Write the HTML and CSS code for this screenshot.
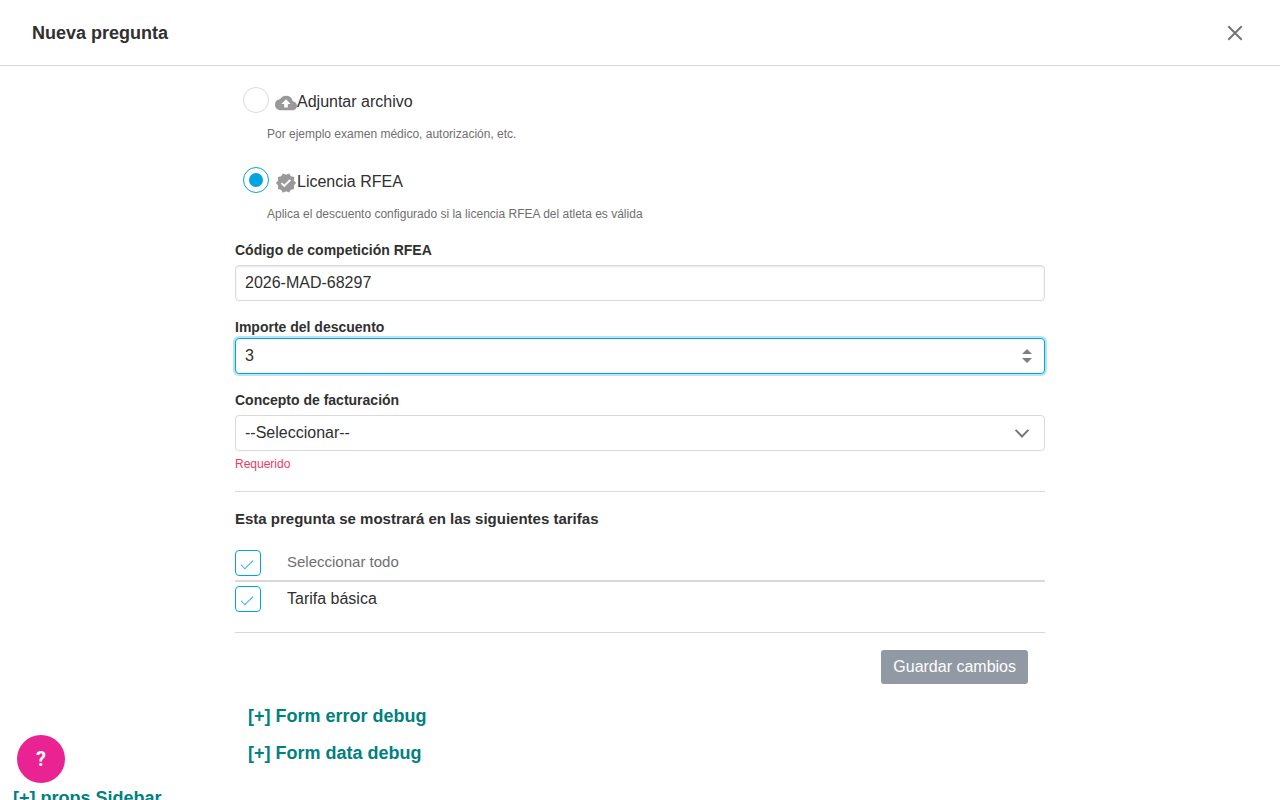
FILE: index.html
```html
<!DOCTYPE html>
<html lang="es">
<head>
<meta charset="utf-8">
<meta name="viewport" content="width=device-width, initial-scale=1">
<title>Nueva pregunta</title>
<link rel="stylesheet" href="styles.css">
</head>
<body>
<header class="topbar">
  <h1 class="topbar-title">Nueva pregunta</h1>
  <button class="close" type="button" aria-label="Cerrar">
    <svg width="16" height="16" viewBox="0 0 16 16"><path d="M1.3 1.3L14.7 14.7M14.7 1.3L1.3 14.7" fill="none" stroke="#757575" stroke-width="2"/></svg>
  </button>
</header>
<main>
  <form class="form">
    <div class="option">
      <div class="option-row">
        <input class="radio" type="radio" name="tipo" id="archivo">
        <label class="option-label" for="archivo">
          <svg class="option-icon" width="22" height="22" viewBox="0 0 24 24"><path fill="#999" d="M19.35 10.04A7.49 7.49 0 0 0 12 4C9.11 4 6.6 5.64 5.35 8.04A5.994 5.994 0 0 0 0 14c0 3.31 2.69 6 6 6h13c2.76 0 5-2.24 5-5 0-2.64-2.05-4.78-4.65-4.96zM14 13v4h-4v-4H7l5-5 5 5h-3z"/></svg>
          <span>Adjuntar archivo</span>
        </label>
      </div>
      <p class="option-help">Por ejemplo examen médico, autorización, etc.</p>
    </div>
    <div class="option">
      <div class="option-row">
        <input class="radio" type="radio" name="tipo" id="licencia" checked>
        <label class="option-label" for="licencia">
          <svg class="option-icon" width="22" height="22" viewBox="0 0 24 24"><path fill="#999" d="M23 12l-2.44-2.79.34-3.69-3.61-.82-1.89-3.2L12 2.96 8.6 1.5 6.71 4.69 3.1 5.5l.34 3.7L1 12l2.44 2.79-.34 3.7 3.61.82L8.6 22.5l3.4-1.47 3.4 1.46 1.89-3.19 3.61-.82-.34-3.69L23 12zm-12.91 4.72l-3.8-3.81 1.48-1.48 2.32 2.33 5.85-5.87 1.48 1.48-7.33 7.35z"/></svg>
          <span>Licencia RFEA</span>
        </label>
      </div>
      <p class="option-help">Aplica el descuento configurado si la licencia RFEA del atleta es válida</p>
    </div>

    <div class="field">
      <label class="field-label spaced" for="codigo">Código de competición RFEA</label>
      <input class="control" type="text" id="codigo" value="2026-MAD-68297">
    </div>
    <div class="field">
      <label class="field-label" for="importe">Importe del descuento</label>
      <div class="control-wrap">
        <input class="control active" type="number" id="importe" value="3">
        <svg class="spinner" width="10" height="14" viewBox="0 0 10 14"><path fill="#808080" d="M5 0L10 5H0zM5 14L0 9h10z"/></svg>
      </div>
    </div>
    <div class="field">
      <label class="field-label spaced" for="concepto">Concepto de facturación</label>
      <div class="control-wrap">
        <select class="control" id="concepto"><option>--Seleccionar--</option></select>
        <svg class="chevron" width="16" height="10" viewBox="0 0 16 10"><path d="M1.6 1.9L8 8.5l6.4-6.6" fill="none" stroke="#777" stroke-width="2"/></svg>
      </div>
      <p class="error">Requerido</p>
    </div>

    <section class="rates">
      <h2 class="rates-title">Esta pregunta se mostrará en las siguientes tarifas</h2>
      <div class="rate rate-all">
        <input class="check" type="checkbox" id="todo" checked>
        <label for="todo">Seleccionar todo</label>
      </div>
      <div class="rate">
        <input class="check" type="checkbox" id="basica" checked>
        <label for="basica">Tarifa básica</label>
      </div>
    </section>

    <div class="actions">
      <button class="save" type="button">Guardar cambios</button>
    </div>
    <div class="debug">
      <button class="debug-toggle" type="button">[+] Form error debug</button>
      <button class="debug-toggle" type="button">[+] Form data debug</button>
    </div>
  </form>
</main>
<footer class="page-foot">
  <button class="debug-toggle" type="button">[+] props Sidebar</button>
</footer>
<button class="help" type="button" aria-label="Ayuda">?</button>
</body>
</html>
```
FILE: styles.css
```css
* { box-sizing: border-box; }
html { scrollbar-width: none; }
body {
  margin: 0;
  background: #fff;
  color: #303030;
  font: 16px/24px "Liberation Sans", Arial, sans-serif;
}
h1, h2, p { margin: 0; }
button, input, select { font: inherit; color: inherit; }
button { border: 0; padding: 0; background: none; cursor: pointer; }

.topbar {
  display: flex;
  align-items: center;
  justify-content: space-between;
  padding: 20px 32px 19px;
  border-bottom: 1px solid #d9d9d9;
}
.topbar-title { font-size: 18px; line-height: 26px; }
.close { display: flex; padding: 4px 5px; }

.form {
  max-width: 842px;
  margin: 0 auto;
  padding: 21px 16px 0;
}
.option { padding-left: 8px; margin-bottom: 24px; }
.option-row { display: flex; align-items: flex-start; gap: 6px; }
.option-label { display: flex; padding-top: 3px; }
.option-icon { margin-top: 2px; }
.option-help {
  margin: 11px 0 0 24px;
  font-size: 12px;
  line-height: 18px;
  color: #6f6f6f;
}
.radio, .check {
  appearance: none;
  flex: none;
  display: grid;
  place-items: center;
  width: 26px;
  height: 26px;
  margin: 0;
  border: 1px solid #d9d9d9;
  background: #fff;
}
.radio { border-radius: 50%; }
.radio:checked, .check:checked { border-color: #00a5df; }
.radio:checked::before {
  content: "";
  width: 14px;
  height: 14px;
  border-radius: 50%;
  background: #00a5df;
}

.field { margin-bottom: 16px; }
.field-label {
  display: block;
  font-size: 14px;
  line-height: 21px;
  font-weight: bold;
}
.spaced { margin-bottom: 4px; }
.option + .field { margin-top: -7px; }
.control-wrap { position: relative; }
.control {
  appearance: none;
  display: block;
  width: 100%;
  height: 36px;
  padding: 0 9px;
  border: 1px solid #d9d9d9;
  border-radius: 4px;
  background: #fff;
  outline: 0;
}
input.control { box-shadow: inset 0 1px 2px #0000001a; }
.control[type="number"] { appearance: textfield; }
.control[type="number"]::-webkit-inner-spin-button { appearance: none; margin: 0; }
input.active { border-color: #00a5df; box-shadow: 0 0 0 2px #b7e5f6; }
.spinner, .chevron { position: absolute; top: 0; bottom: 0; margin: auto 0; pointer-events: none; }
.spinner { right: 13px; }
.chevron { right: 15px; }
.error {
  margin-top: 4px;
  font-size: 12px;
  line-height: 18px;
  color: #f03a5f;
}

.rates {
  padding: 16px 0 20px;
  border-top: 1px solid #d9d9d9;
  border-bottom: 1px solid #d9d9d9;
  margin-top: 18px;
}
.rates-title { margin-bottom: 20px; font-size: 15px; line-height: 22px; }
.rate { display: flex; align-items: center; gap: 26px; }
.rate-all {
  padding-bottom: 4px;
  margin-bottom: 4px;
  border-bottom: 2px solid #d9d9d9;
  font-size: 15px;
  color: #707070;
}
.rate-all label { padding-bottom: 2px; }
.check { border-radius: 4px; padding: 0 2px 1px 0; }
.check:checked::before {
  content: "";
  width: 11px;
  height: 5px;
  border: solid #1eaee2;
  border-width: 0 0 1px 1px;
  transform: rotate(-45deg);
}

.actions { display: flex; justify-content: flex-end; padding: 17px 17px 0; }
.save {
  height: 34px;
  padding: 0 12px;
  border-radius: 3px;
  background: #9199a5;
  color: #fff;
}
.debug {
  display: flex;
  flex-direction: column;
  align-items: flex-start;
  gap: 10px;
  padding: 19px 13px 0;
}
.debug-toggle {
  font-size: 18px;
  line-height: 27px;
  font-weight: bold;
  color: #008080;
}
.page-foot { display: flex; padding: 18px 13px 0; }
.help {
  position: fixed;
  left: 17px;
  bottom: 17px;
  width: 48px;
  height: 48px;
  border-radius: 50%;
  background: #ea2393;
  color: #fff;
  font: bold 20px/48px Roboto, sans-serif;
}
```
